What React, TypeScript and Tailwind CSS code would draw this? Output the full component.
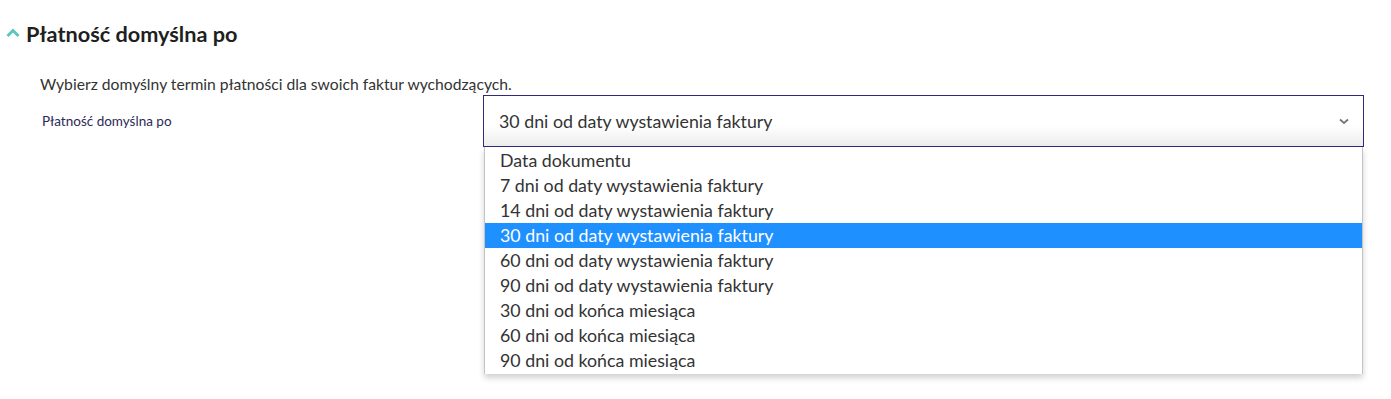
const options = [
  'Data dokumentu',
  '7 dni od daty wystawienia faktury',
  '14 dni od daty wystawienia faktury',
  '30 dni od daty wystawienia faktury',
  '60 dni od daty wystawienia faktury',
  '90 dni od daty wystawienia faktury',
  '30 dni od końca miesiąca',
  '60 dni od końca miesiąca',
  '90 dni od końca miesiąca',
];

export default function App() {
  const selected = 3;
  return (
    <div className="min-h-[399px] bg-white font-['Lato',sans-serif] text-[#333]">
      <div className="flex items-center gap-[6px] pl-[6px] pt-[20px]">
        <svg width="14" height="10" viewBox="0 0 14 10" className="mt-[-3px]">
          <path d="M1.5 8 L7 2.5 L12.5 8" fill="none" stroke="#5cc6bd" strokeWidth="3" />
        </svg>
        <h2 className="text-[21.7px] font-bold leading-[28px] text-[#1f1f1f]">Płatność domyślna po</h2>
      </div>

      <div className="pl-[40px] pr-[27px] pt-[26px]">
        <p className="text-[15.7px] leading-[20px] text-[#333]">
          Wybierz domyślny termin płatności dla swoich faktur wychodzących.
        </p>
        <div className="mt-[1px] flex">
          <label className="w-[443px] pl-[2px] pt-[17px] text-[13.5px] leading-[18px] text-[#2b2a55]">
            Płatność domyślna po
          </label>
          <div className="relative flex-1">
            <div className="flex h-[52px] items-center justify-between border border-[#2f2a7c] bg-gradient-to-b from-white from-60% to-[#ececec] pl-[15px] pr-[14px]">
              <span className="text-[17.8px] text-[#333]">{options[selected]}</span>
              <svg width="10" height="7" viewBox="0 0 10 7">
                <path d="M1 1.5 L5 5 L9 1.5" fill="none" stroke="#777" strokeWidth="1.8" />
              </svg>
            </div>
            <ul className="absolute left-[1px] right-[1px] top-[52px] border-x border-[#c4c4c4] bg-white py-[1px] shadow-[0_4px_6px_rgba(0,0,0,0.18)]">
              {options.map((o, i) => (
                <li
                  key={o}
                  className={
                    i === selected
                      ? 'h-[25px] bg-[#1e90ff] pl-[15px] text-[17.8px] leading-[25px] text-white'
                      : 'h-[25px] pl-[15px] text-[17.8px] leading-[25px] text-[#333]'
                  }
                >
                  {o}
                </li>
              ))}
            </ul>
          </div>
        </div>
      </div>
    </div>
  );
}
